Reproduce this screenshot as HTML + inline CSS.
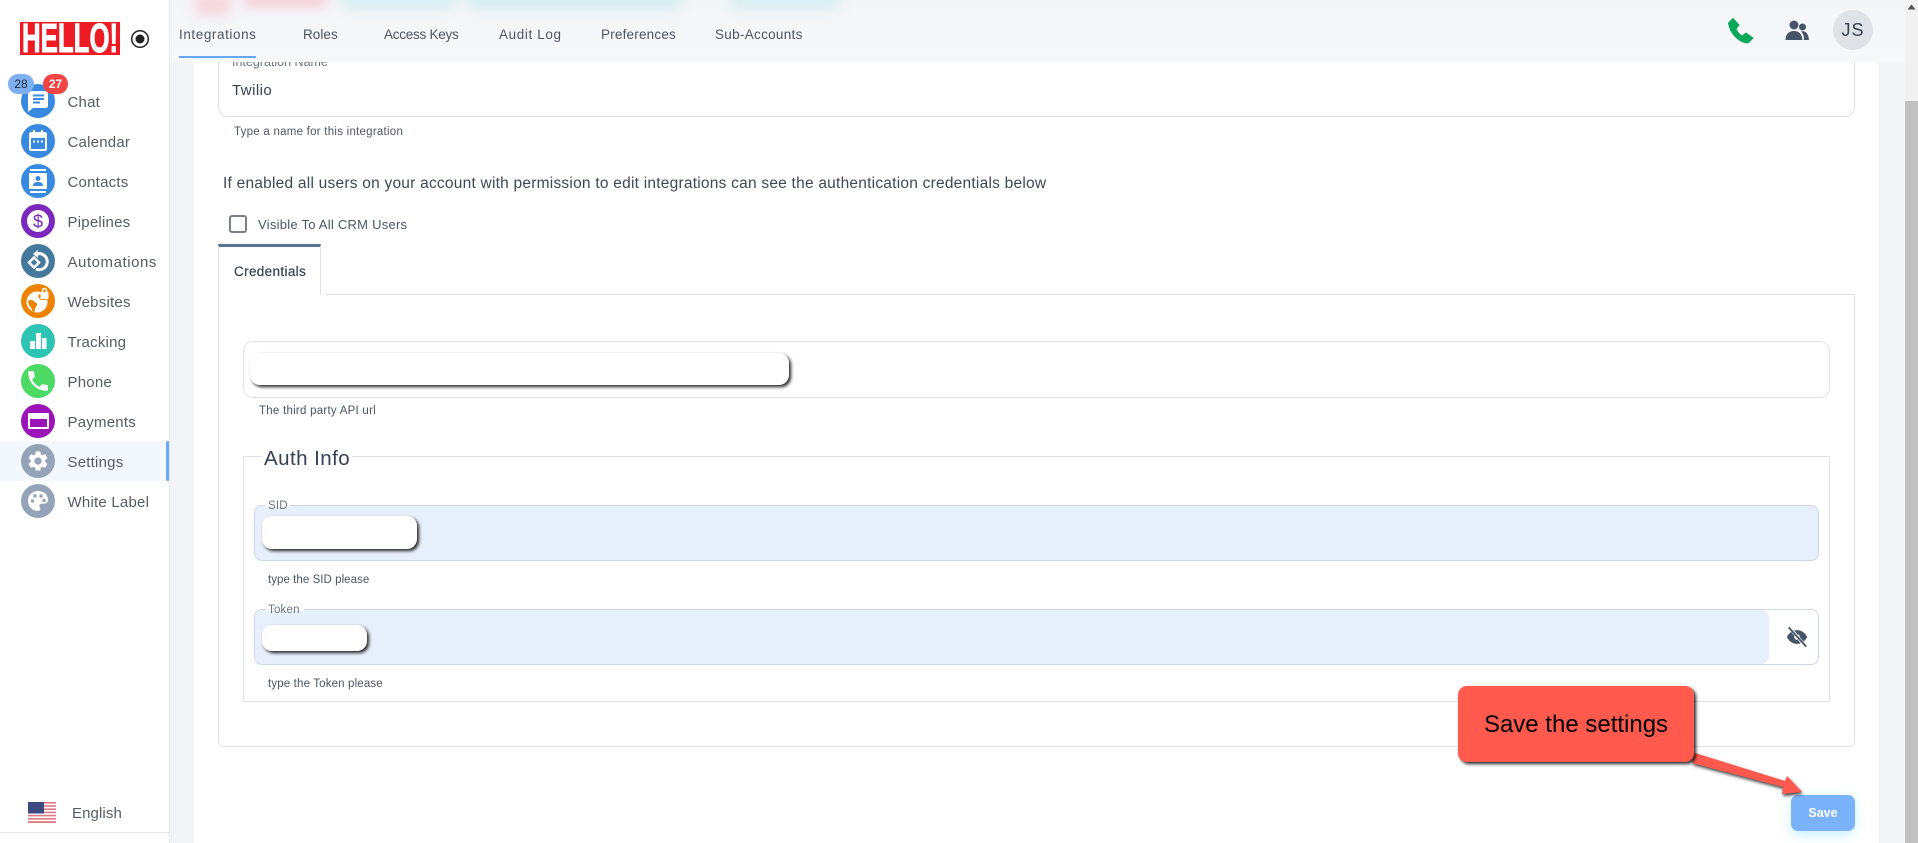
<!DOCTYPE html>
<html><head><meta charset="utf-8"><title>Integrations</title>
<style>
*{box-sizing:border-box}
html,body{margin:0;padding:0;width:1918px;height:843px;overflow:hidden;background:#fff;font-family:"Liberation Sans",sans-serif;color:#4b5563}
.a{position:absolute;white-space:nowrap}
.lbl{left:67.5px;font-size:15px;letter-spacing:.22px;color:#565b63;line-height:20px}
.ic{position:absolute;left:21px;width:34px;height:34px;overflow:visible}
.tab{top:26px;font-size:13.5px;letter-spacing:.2px;color:#4b5563;line-height:18px}
.help{font-size:11.5px;letter-spacing:.25px;color:#4b5563;line-height:14px}
.pill{position:absolute;background:#fff;border-radius:10px;box-shadow:2px 2px 3px rgba(0,0,0,.85)}
.bl{position:absolute;filter:blur(6px)}
</style></head><body>
<!-- page bg -->
<div class="a" style="left:170px;top:0;width:1735px;height:843px;background:#f2f4f7"></div>
<div class="a" style="left:194px;top:50px;width:1685px;height:793px;background:#fff"></div>
<!-- card -->
<div class="a" style="left:218px;top:294px;width:1637px;height:453px;border:1px solid #e0e2e6;border-top:0;border-radius:0 0 5px 5px"></div>
<div class="a" style="left:325px;top:294px;width:1529px;height:1px;background:#dfe2e6"></div>
<!-- Integration name -->
<div class="a" style="left:218px;top:50px;width:1637px;height:67px;border:1px solid #dde0e5;border-radius:10px;background:#fff"></div>
<div class="a" style="left:230px;top:55px;font-size:12.5px;color:#6b7280;line-height:14px;background:#fff;padding:0 2px">Integration Name</div>
<div class="a" style="left:232px;top:81px;font-size:15px;letter-spacing:.45px;color:#374151;line-height:20px">Twilio</div>
<div class="a help" style="left:234px;top:125px">Type a name for this integration</div>
<div class="a" style="left:223px;top:175px;font-size:15.5px;letter-spacing:.23px;color:#3f4856;line-height:18px">If enabled all users on your account with permission to edit integrations can see the authentication credentials below</div>
<div class="a" style="left:229px;top:215px;width:18px;height:18px;border:2px solid #7b7f85;border-radius:3px;background:#fff"></div>
<div class="a" style="left:258px;top:216px;font-size:13px;letter-spacing:.25px;color:#4b5563;line-height:18px">Visible To All CRM Users</div>
<!-- tab -->
<div class="a" style="left:218px;top:244px;width:103px;height:51px;border-top:3px solid #5a7390;border-right:1px solid #dfe2e6;border-left:1px solid #dfe2e6;background:#fff"></div>
<div class="a" style="left:234px;top:263px;font-size:13.5px;letter-spacing:.35px;color:#374151;line-height:18px;-webkit-text-stroke:.2px #374151">Credentials</div>
<!-- API url -->
<div class="a" style="left:243px;top:341px;width:1587px;height:57px;border:1px solid #e1e3e7;border-radius:10px;background:#fff"></div>
<div class="pill" style="left:250px;top:353px;width:539px;height:32px"></div>
<div class="a help" style="left:259px;top:404px">The third party API url</div>
<!-- fieldset -->
<div class="a" style="left:243px;top:456px;width:1587px;height:246px;border:1px solid #dfe2e6"></div>
<div class="a" style="left:262px;top:446px;padding:0 2px;background:#fff;font-size:20.5px;letter-spacing:.45px;color:#374151;line-height:26px">Auth Info</div>
<!-- SID -->
<div class="a" style="left:254px;top:505px;width:1565px;height:56px;background:#e8effc;border:1px solid #cdd7e5;border-radius:8px"></div>
<div class="a" style="left:266px;top:500px;width:24px;height:7px;background:#fff"></div>
<div class="a" style="left:268px;top:499px;font-size:11.5px;letter-spacing:.2px;color:#6b7280;line-height:14px">SID</div>
<div class="pill" style="left:262px;top:516px;width:155px;height:33px"></div>
<div class="a help" style="left:268px;top:573px;letter-spacing:.05px">type the SID please</div>
<!-- Token -->
<div class="a" style="left:254px;top:609px;width:1565px;height:56px;background:#fff;border:1px solid #cdd7e5;border-radius:8px"></div>
<div class="a" style="left:255px;top:610px;width:1514px;height:54px;background:#e8effc;border-radius:8px"></div>
<div class="a" style="left:266px;top:604px;height:7px;width:38px;background:#fff"></div>
<div class="a" style="left:268px;top:603px;font-size:11.5px;letter-spacing:.2px;color:#6b7280;line-height:14px">Token</div>
<div class="pill" style="left:262px;top:625px;width:105px;height:26px"></div>
<div class="a help" style="left:268px;top:677px;letter-spacing:.15px">type the Token please</div>
<svg class="a" style="left:1786px;top:626px" width="22" height="22" viewBox="0 0 24 24"><path fill="#475569" d="M12 4.500C7 4.500 3 7.600 1 12c2 4.400 6 7.500 11 7.500s9-3.100 11-7.500c-2-4.400-6-7.500-11-7.500z"/><circle cx="12" cy="12" r="3" fill="#fff"/><path stroke="#fff" stroke-width="3.500" d="M5 3l16 19"/><path stroke="#475569" stroke-width="2" d="M3 1.500l19 21"/></svg>
<!-- Save -->
<div class="a" style="left:1791px;top:795px;width:64px;height:36px;border-radius:7px;background:#7ab3fa;box-shadow:0 4px 12px rgba(130,225,255,.45);color:#fff;font-size:12.5px;font-weight:700;text-align:center;line-height:36px">Save</div>
<!-- arrow -->
<svg class="a" style="left:1680px;top:740px;filter:drop-shadow(1.5px 2px 1.5px rgba(0,0,0,.75))" width="140" height="70" viewBox="0 0 140 70"><polygon fill="#ff5a4d" points="15,13 105,41 107,36 122,52 102,54 103,47 12,23"/></svg>
<div class="a" style="left:1458px;top:686px;width:236px;height:76px;background:#ff5a4d;border-radius:9px;box-shadow:2px 2px 3px rgba(0,0,0,.85);color:#000;font-size:24px;text-align:center;line-height:78px">Save the settings</div>
<!-- header -->
<div class="a" style="left:170px;top:0;width:1735px;height:62px;background:linear-gradient(#f3f5f7,#f7f8fa);overflow:hidden">
<div class="bl" style="left:25px;top:-6px;width:35px;height:20px;background:#f6d4dc"></div>
<div class="bl" style="left:74px;top:-6px;width:82px;height:12px;background:#f6c8d2"></div>
<div class="bl" style="left:173px;top:-6px;width:112px;height:14px;background:#d4ecef"></div>
<div class="bl" style="left:299px;top:-6px;width:211px;height:14px;background:#d0ebee"></div>
<div class="bl" style="left:562px;top:-6px;width:107px;height:14px;background:#d4ecef"></div>
</div>
<div class="a" style="left:179px;top:56px;width:77px;height:2px;background:#6aa7f3"></div>
<div class="a tab" style="left:179px;letter-spacing:.58px">Integrations</div>
<div class="a tab" style="left:303px;letter-spacing:.05px">Roles</div>
<div class="a tab" style="left:384px;letter-spacing:-.25px">Access Keys</div>
<div class="a tab" style="left:499px;letter-spacing:.62px">Audit Log</div>
<div class="a tab" style="left:601px">Preferences</div>
<div class="a tab" style="left:715px;letter-spacing:.3px">Sub-Accounts</div>
<svg class="a" style="left:1728px;top:18px" width="26" height="26" viewBox="0 0 26 26"><path fill="#0ca85a" stroke="#0ca85a" stroke-width="1" stroke-linejoin="round" d="M.5 5L5 .5 11 7 8 11C9 14 11 16 14 18L18 15 25 20 20 25C12 25 2 16 .5 5Z"/></svg>
<svg class="a" style="left:1784px;top:17px" width="26" height="26" viewBox="0 0 26 26"><g fill="#475569"><circle cx="10" cy="8" r="4.5"/><circle cx="18.500" cy="10" r="3.500"/><path d="M1.500 23c0-6 3.500-9 8.500-9s8 3 8.500 9z"/><path d="M17 14.500c4-1 7.500 1.500 8 8.500h-5c0-4-1-6.500-3-8.500z"/></g></svg>
<div class="a" style="left:1833px;top:10px;width:40px;height:40px;border-radius:50%;background:#dfe2e7;color:#374151;font-size:18px;letter-spacing:1px;text-align:center;line-height:41px">JS</div>
<!-- scrollbar -->
<div class="a" style="left:1905px;top:0;width:13px;height:843px;background:#f1f1f1"></div>
<div class="a" style="left:1905px;top:101px;width:13px;height:742px;background:#c1c1c1"></div>
<svg class="a" style="left:1906px;top:3px" width="11" height="8" viewBox="0 0 11 8"><path fill="#505050" d="M5.500 1.500L9.500 6.500H1.500z"/></svg>
<!-- sidebar -->
<div class="a" style="left:0;top:0;width:170px;height:843px;background:#fff;border-right:1px solid #e5e7eb"></div>
<div class="a" style="left:0;top:441px;width:169px;height:40px;background:#f3f8ff"></div>
<div class="a" style="left:166px;top:441px;width:3px;height:40px;background:#6ba8f8;border-radius:2px 0 0 2px"></div>
<div class="a" style="left:0;top:832px;width:169px;height:1px;background:#e5e7eb"></div>
<!-- logo -->
<div class="a" style="left:20px;top:22px;width:100px;height:33px;background:#ed1c24;overflow:hidden"><span class="a" style="left:2px;top:0;color:#fff;font-family:'Liberation Sans',sans-serif;font-weight:700;font-size:41px;line-height:33px;transform:scaleX(.63);transform-origin:left center;-webkit-text-stroke:1px #fff">HELLO!</span></div>
<svg class="a" style="left:130px;top:29px" width="20" height="20" viewBox="0 0 20 20"><circle cx="10" cy="10" r="8.3" fill="none" stroke="#222" stroke-width="1.5"/><circle cx="10" cy="10" r="4.5" fill="#222"/></svg>
<!-- chat -->
<svg class="ic" style="top:84px" viewBox="0 0 34 34"><circle cx="17" cy="17" r="17" fill="#388ae0"/><path fill="#fff" d="M9 7h16c1 0 2 1 2 2v13c0 1-1 2-2 2H12l-5 4V9c0-1 1-2 2-2z"/><path stroke="#388ae0" stroke-width="2" d="M12 11.500h11M12 15h11M12 18.500h7"/></svg>
<svg class="ic" style="top:124px" viewBox="0 0 34 34"><circle cx="17" cy="17" r="17" fill="#388ae0"/><path fill="#fff" d="M10 8h2V6h2v2h6V6h2v2h2c1 0 2 1 2 2v15c0 1-1 2-2 2H10c-1 0-2-1-2-2V10c0-1 1-2 2-2z"/><rect x="10" y="14" width="14" height="11" fill="#388ae0"/><path stroke="#fff" stroke-width="2" stroke-dasharray="2 2" d="M12 17.500h10"/></svg>
<svg class="ic" style="top:164px" viewBox="0 0 34 34"><circle cx="17" cy="17" r="17" fill="#388ae0"/><rect x="9" y="5" width="16" height="2" fill="#fff"/><rect x="9" y="27" width="16" height="2" fill="#fff"/><rect x="8" y="9" width="18" height="16" rx="1" fill="#fff"/><circle cx="17" cy="14.500" r="2.500" fill="#388ae0"/><path fill="#388ae0" d="M12 22c0-3 2-4 5-4s5 1 5 4z"/></svg>
<svg class="ic" style="top:204px" viewBox="0 0 34 34"><circle cx="17" cy="17" r="17" fill="#7b28bd"/><circle cx="17" cy="17" r="11" fill="#fff"/><text x="17" y="23.500" text-anchor="middle" font-family="Liberation Sans" font-size="18" fill="#7b28bd">$</text></svg>
<svg class="ic" style="top:244px" viewBox="0 0 34 34"><circle cx="17" cy="17" r="17" fill="#44799d"/><path fill="none" stroke="#fff" stroke-width="3" d="M16 10a8 8 0 1 1 -1 15"/><path fill="#fff" d="M17 6l-5 4 5 4z"/><path fill="none" stroke="#fff" stroke-width="2.500" d="M13 13.500l5 5-5 5-5-5z"/></svg>
<svg class="ic" style="top:284px" viewBox="0 0 34 34"><circle cx="17" cy="17" r="17" fill="#ee8303"/><circle cx="16" cy="18" r="10.500" fill="#fff"/><path fill="#ee8303" d="M7 17c4-3 5 0 7 1s3 3 1 5-1 4-1 5l-3-1c0-3-2-4-3-6zM19 10c3 0 2 3 4 4l4 1-3 1c-3 0-5 0-6-2s-1-3 1-4z"/><rect x="19.500" y="8" width="8" height="7" rx="1" fill="#fff"/><path fill="none" stroke="#fff" stroke-width="1.500" d="M21.500 8V6.500a2 2 0 0 1 4 0V8"/></svg>
<svg class="ic" style="top:324px" viewBox="0 0 34 34"><circle cx="17" cy="17" r="17" fill="#2ec4b4"/><rect x="9" y="17" width="5" height="8" fill="#fff"/><rect x="15" y="9" width="5" height="16" fill="#fff"/><rect x="21" y="14" width="4.500" height="11" fill="#fff"/></svg>
<svg class="ic" style="top:364px" viewBox="0 0 34 34"><circle cx="17" cy="17" r="17" fill="#4cd964"/><path fill="#fff" transform="translate(3.800 3.800) scale(1.1)" d="M6.620 10.790c1.440 2.830 3.760 5.140 6.590 6.590l2.200-2.200c.27-.27.67-.36 1.020-.24 1.120.37 2.330.57 3.570.57.55 0 1 .45 1 1V20c0 .55-.45 1-1 1-9.390 0-17-7.610-17-17 0-.55.45-1 1-1h3.500c.55 0 1 .45 1 1 0 1.250.2 2.450.57 3.570.11.35.03.74-.25 1.020l-2.200 2.200z"/></svg>
<svg class="ic" style="top:404px" viewBox="0 0 34 34"><circle cx="17" cy="17" r="17" fill="#9a14b8"/><rect x="7" y="9" width="21" height="16" rx="1" fill="#fff"/><rect x="9" y="15" width="17" height="8" fill="#9a14b8"/></svg>
<svg class="ic" style="top:444px" viewBox="0 0 34 34"><circle cx="17" cy="17" r="17" fill="#94a3b8"/><path fill="#fff" transform="translate(5 5)" d="M19.140 12.940c.04-.3.06-.61.06-.94 0-.32-.02-.64-.07-.94l2.030-1.580c.18-.14.23-.41.12-.61l-1.920-3.320c-.12-.22-.37-.29-.59-.22l-2.390.96c-.5-.38-1.030-.7-1.620-.94l-.36-2.540c-.04-.24-.24-.41-.48-.41h-3.840c-.24 0-.43.17-.47.41l-.36 2.540c-.59.24-1.130.57-1.620.94l-2.390-.96c-.22-.08-.47 0-.59.22L2.740 8.870c-.12.21-.08.47.12.61l2.030 1.580c-.05.3-.09.63-.09.94s.02.64.07.94l-2.030 1.580c-.18.14-.23.41-.12.61l1.920 3.320c.12.22.37.29.59.22l2.390-.96c.5.38 1.030.7 1.620.94l.36 2.540c.05.24.24.41.48.41h3.840c.24 0 .44-.17.47-.41l.36-2.540c.59-.24 1.130-.56 1.620-.94l2.390.96c.22.08.47 0 .59-.22l1.920-3.320c.12-.22.07-.47-.12-.61l-2.010-1.580zM12 15.600c-1.980 0-3.600-1.620-3.600-3.600s1.620-3.600 3.600-3.600 3.600 1.620 3.600 3.600-1.620 3.600-3.600 3.600z"/></svg>
<svg class="ic" style="top:484px" viewBox="0 0 34 34"><circle cx="17" cy="17" r="17" fill="#94a3b8"/><path fill="#fff" d="M17 7C11 7 7 11.500 7 17s4.500 10 10 10c1.500 0 2.300-1 2.300-2.200 0-1.400-1-1.800-1-3 0-1.200 1-2 2.200-2h2.500c2.500 0 4-1.800 4-4C27 10.500 22.500 7 17 7z"/><g fill="#94a3b8"><circle cx="11.500" cy="17" r="1.700"/><circle cx="14" cy="12" r="1.700"/><circle cx="20" cy="12" r="1.700"/><circle cx="23" cy="16.500" r="1.700"/></g></svg>
<div class="a lbl" style="top:93px">Chat</div>
<div class="a lbl" style="top:133px">Calendar</div>
<div class="a lbl" style="top:173px">Contacts</div>
<div class="a lbl" style="top:213px">Pipelines</div>
<div class="a lbl" style="top:253px;letter-spacing:.55px">Automations</div>
<div class="a lbl" style="top:293px">Websites</div>
<div class="a lbl" style="top:333px">Tracking</div>
<div class="a lbl" style="top:373px">Phone</div>
<div class="a lbl" style="top:413px">Payments</div>
<div class="a lbl" style="top:453px">Settings</div>
<div class="a lbl" style="top:493px">White Label</div>
<div class="a" style="left:8px;top:74px;width:26px;height:20px;border-radius:10px;background:#7db0f0;color:#1f2937;font-size:12px;text-align:center;line-height:20px">28</div>
<div class="a" style="left:43px;top:74px;width:25px;height:20px;border-radius:10px;background:#f44545;color:#fff;font-size:12px;font-weight:700;text-align:center;line-height:20px">27</div>
<!-- flag -->
<svg class="a" style="left:28px;top:802px" width="28" height="21" viewBox="0 0 28 21"><rect width="28" height="21" fill="#fff"/><g fill="#df7a84"><rect y="0" width="28" height="1.600"/><rect y="3.200" width="28" height="1.600"/><rect y="6.400" width="28" height="1.600"/><rect y="9.600" width="28" height="1.600"/><rect y="12.800" width="28" height="1.600"/><rect y="16" width="28" height="1.600"/><rect y="19.200" width="28" height="1.800"/></g><rect width="16" height="11.500" fill="#3b4a80"/></svg>
<div class="a lbl" style="left:72px;top:804px;letter-spacing:.1px">English</div>
</body></html>
